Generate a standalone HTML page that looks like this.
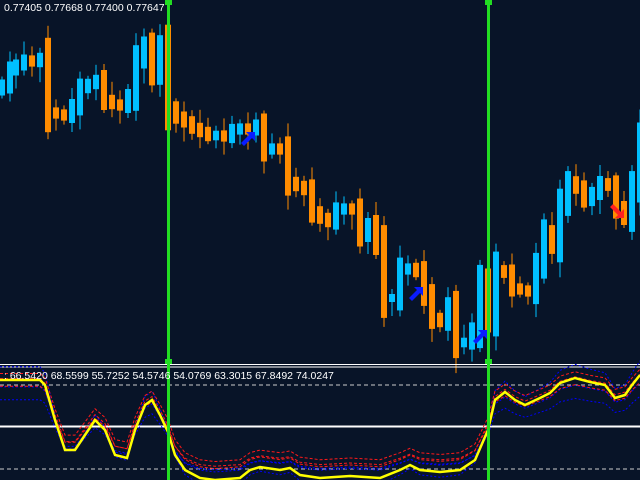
<!DOCTYPE html>
<html><head><meta charset="utf-8"><style>
html,body{margin:0;padding:0;background:#081428;width:640px;height:480px;overflow:hidden}
svg{display:block}
text{font-family:"Liberation Sans",sans-serif;font-size:10.5px;fill:#fff}
</style></head><body>
<svg id="s" width="640" height="480" xmlns="http://www.w3.org/2000/svg">
<rect width="640" height="480" fill="#081428"/>
<g id="c"></g>
<line x1="0" y1="364.5" x2="640" y2="364.5" stroke="#fff" stroke-width="1"/>
<line x1="0" y1="367" x2="640" y2="367" stroke="#fff" stroke-width="1"/>
<line x1="0" y1="385" x2="640" y2="385" stroke="#ccc" stroke-dasharray="4,3"/>
<line x1="0" y1="469" x2="640" y2="469" stroke="#ccc" stroke-dasharray="4,3"/>
<line x1="0" y1="426.5" x2="640" y2="426.5" stroke="#fff" stroke-width="2"/>
<g id="ind"></g>
<rect x="167" y="0" width="3" height="480" fill="#22dd22"/>
<rect x="487" y="0" width="3" height="480" fill="#22dd22"/>
<rect x="165" y="0" width="7" height="5" fill="#22dd22"/>
<rect x="485" y="0" width="7" height="5" fill="#22dd22"/>
<rect x="165" y="359" width="7" height="5" fill="#22dd22"/>
<rect x="485" y="359" width="7" height="5" fill="#22dd22"/>
<text x="4" y="11">0.77405 0.77668 0.77400 0.77647</text>
<text x="4" y="379">: 66.5420 68.5599 55.7252 54.5746 54.0769 63.3015 67.8492 74.0247</text>
<path d="M241 143 L249 135 L246 132 L255 132 L255 141 L252 138 L244 146Z" fill="#0a1cff"/>
<path d="M409 298 L417 290 L414 287 L423 287 L423 296 L420 293 L412 301Z" fill="#0a1cff"/>
<path d="M473 341 L481 333 L478 330 L487 330 L487 339 L484 336 L476 344Z" fill="#0a1cff"/>
<path d="M610 207 L618 215 L615 218 L624 218 L624 209 L621 212 L613 204Z" fill="#ff2020"/>
</svg>
<script>
(function(){
var cl=[[2,85],[10,70],[16,65],[24,60],[32,62],[40,58],[48,112],[56,114],[64,116],[72,106],[80,88],[88,84],[96,80],[104,100],[112,104],[120,106],[128,96],[136,60],[144,45],[152,73],[160,47],[168,108],[176,117],[184,122],[192,128],[200,132],[208,136],[216,135],[224,137],[232,130],[240,128],[248,130],[256,125],[264,150],[272,148],[280,150],[288,182],[296,186],[304,190],[312,212],[320,218],[328,222],[336,210],[344,208],[352,210],[360,235],[368,225],[376,245],[384,298],[392,298],[400,270],[408,268],[416,272],[424,295],[432,318],[440,322],[448,306],[456,343],[464,342],[472,330],[480,283],[488,318],[496,270],[504,273],[512,288],[520,290],[528,292],[536,265],[544,233],[552,246],[560,205],[568,182],[576,188],[584,200],[592,193],[600,183],[608,186],[616,208],[624,218],[632,185],[640,140]];
var g='',p=cl[0][1]+5;
for(var i=0;i<cl.length;i++){var x=cl[i][0],y=cl[i][1],o=p;var e=Math.abs(y-o)*0.3+4;var tp=Math.min(o,y)-e,bt=Math.max(o,y)+e;var col=y>o?'#ff8c00':'#00bfff';var h=(i*7%11)+3,l=(i*5%13)+3;
g+='<rect x="'+(x-0.5)+'" y="'+(tp-h)+'" width="1" height="'+(bt-tp+h+l)+'" fill="'+col+'"/>';
g+='<rect x="'+(x-3)+'" y="'+tp+'" width="6" height="'+(bt-tp)+'" fill="'+col+'"/>';p=y;}
document.getElementById('c').innerHTML=g;
var yl=[[0,380],[40,380],[45,385],[55,420],[65,450],[75,450],[85,435],[95,420],[105,430],[115,455],[127,458],[135,430],[145,405],[152,400],[160,415],[168,432],[175,455],[185,470],[200,478],[215,480],[240,478],[250,470],[260,467],[280,470],[290,468],[300,475],[320,478],[350,476],[380,478],[400,470],[410,465],[420,470],[440,472],[460,470],[475,460],[488,430],[495,400],[505,392],[515,400],[525,405],[540,398],[550,393],[560,383],[575,378],[590,382],[605,385],[615,398],[625,395],[632,385],[640,375]];
function path(dy,sc){return 'M'+yl.map(function(q){var y=q[1];var d=(426-y)*sc;return q[0]+' '+(y+dy+d);}).join(' L');}
var s='';
[[0,0.15,'#0000ff'],[6,0.3,'#0000ff'],[-4,-0.2,'#0000ff']].forEach(function(a){s+='<path d="'+path(a[0],a[1])+'" fill="none" stroke="'+a[2]+'" stroke-width="1" stroke-dasharray="2,2"/>';});
[[-6,0.1],[-12,0.12],[-3,0.2]].forEach(function(a){s+='<path d="'+path(a[0],a[1])+'" fill="none" stroke="#ff1a1a" stroke-width="1" stroke-dasharray="3,2"/>';});
s+='<path d="'+path(0,0)+'" fill="none" stroke="#ffff00" stroke-width="2.5"/>';
document.getElementById('ind').innerHTML=s;
})();
</script>
</body></html>
